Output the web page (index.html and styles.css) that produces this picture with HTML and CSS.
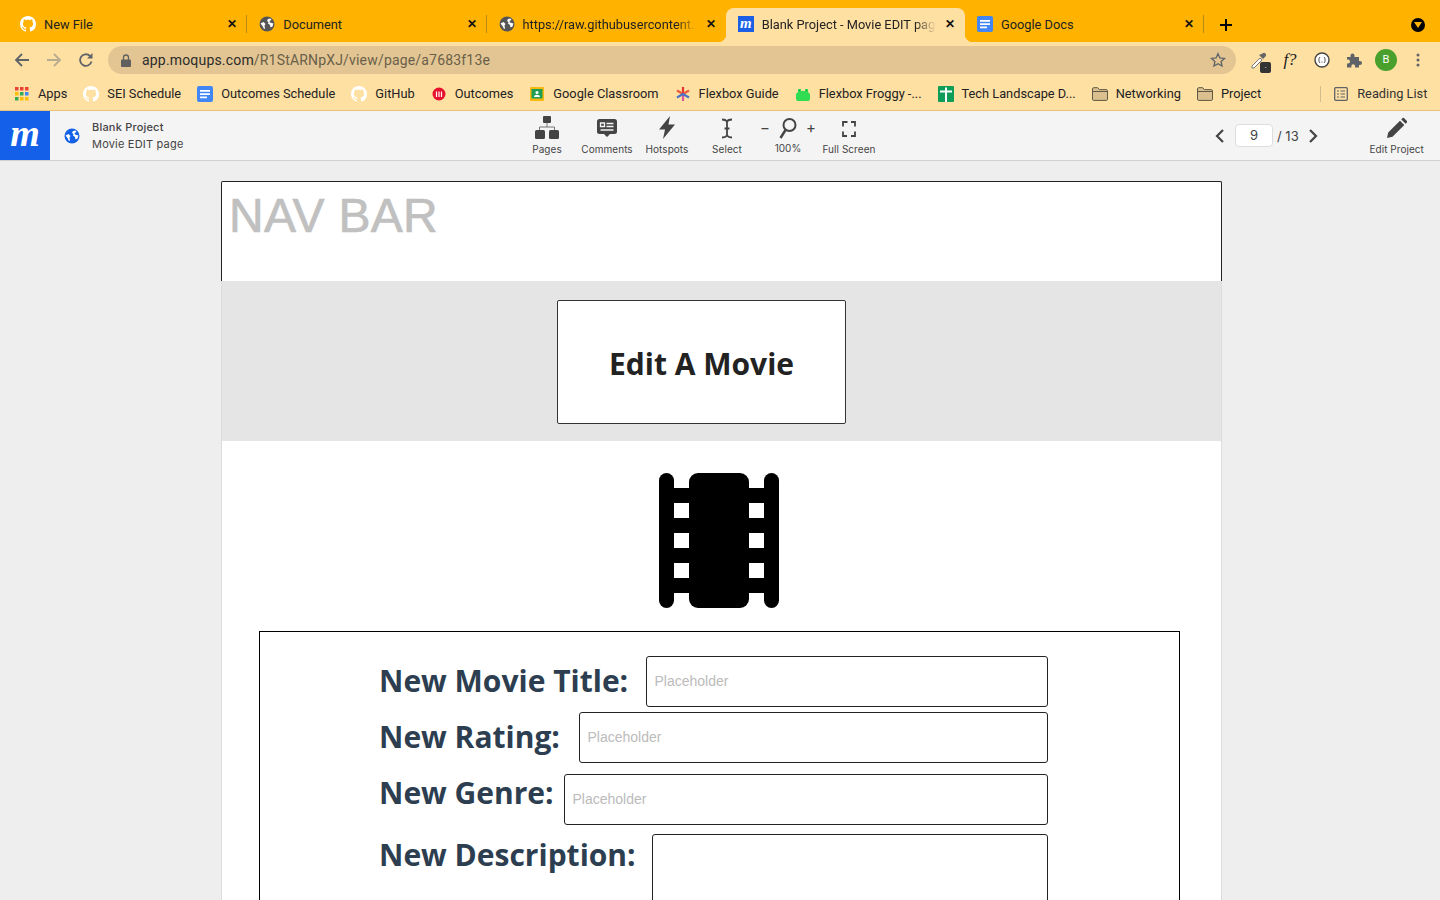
FILE: index.html
```html
<!DOCTYPE html>
<html lang="en">
<head>
<meta charset="UTF-8">
<meta name="viewport" content="width=device-width, initial-scale=1.0">
<title>Blank Project - Movie EDIT page</title>
<link rel="stylesheet" href="styles.css">
</head>
<body>
<svg class="defs" width="0" height="0">
  <symbol id="gh" viewBox="0 0 16 16"><path fill="#fff" d="M8 0C3.58 0 0 3.58 0 8c0 3.54 2.29 6.53 5.47 7.59.4.07.55-.17.55-.38 0-.19-.01-.82-.01-1.49-2.01.37-2.53-.49-2.69-.94-.09-.23-.48-.94-.82-1.13-.28-.15-.68-.52-.01-.53.63-.01 1.08.58 1.23.82.72 1.21 1.87.87 2.33.66.07-.52.28-.87.51-1.07-1.78-.2-3.64-.89-3.64-3.95 0-.87.31-1.59.82-2.15-.08-.2-.36-1.02.08-2.12 0 0 .67-.21 2.2.82.64-.18 1.32-.27 2-.27.68 0 1.36.09 2 .27 1.53-1.04 2.2-.82 2.2-.82.44 1.1.16 1.92.08 2.12.51.56.82 1.27.82 2.15 0 3.07-1.87 3.75-3.65 3.95.29.25.54.73.54 1.48 0 1.07-.01 1.93-.01 2.2 0 .21.15.46.55.38A8.013 8.013 0 0016 8c0-4.42-3.58-8-8-8z"/></symbol>
  <symbol id="globe" viewBox="0 0 16 16"><circle cx="8" cy="8" r="7.5" fill="currentColor"/><path fill="#fff" d="M1.500 7.500l3-1.500 2 2-1 1.500.5 3-1 .5-1.500-3zM9 3l2.500-.5 1 1.500-2 1 .5 1.500 3.500 1-1 3-2 1-.5-2.500-2-1.500.5-1.500-1.500-1z"/></symbol>
  <symbol id="doc" viewBox="0 0 16 16"><rect width="16" height="16" rx="2" fill="#4285f4"/><path fill="#fff" d="M3 4h10v1.700H3zM3 7.300h10V9H3zM3 10.600h7v1.700H3z"/></symbol>
  <symbol id="folder" viewBox="0 0 16 14"><path fill="#d9c08e" stroke="#5f5845" d="M.5 2c0-.8.5-1.300 1.200-1.300h4l1.600 1.900h7c.7 0 1.200.5 1.200 1.200v8.400c0 .7-.5 1.200-1.200 1.200H1.700c-.7 0-1.200-.5-1.200-1.200z"/><path stroke="#5f5845" d="M.5 4.500h15"/></symbol>
</svg>

<div class="tabstrip">
  <div class="tab">
    <svg class="fav"><use href="#gh"/></svg><span class="tab-title">New File</span><span class="tab-x">&#x2715;</span>
  </div>
  <div class="tab">
    <svg class="fav globe-dark"><use href="#globe"/></svg><span class="tab-title">Document</span><span class="tab-x">&#x2715;</span>
  </div>
  <div class="tab tab-nosep">
    <svg class="fav globe-dark"><use href="#globe"/></svg><span class="tab-title tab-fade">https://raw.githubusercontent.</span><span class="tab-x">&#x2715;</span>
  </div>
  <div class="tab tab-active">
    <span class="fav moq-fav">m</span><span class="tab-title tab-fade">Blank Project - Movie EDIT pag</span><span class="tab-x">&#x2715;</span>
  </div>
  <div class="tab">
    <svg class="fav"><use href="#doc"/></svg><span class="tab-title">Google Docs</span><span class="tab-x">&#x2715;</span>
  </div>
  <svg class="newtab" width="14" height="14" viewBox="0 0 14 14"><path d="M7 1v12M1 7h12" stroke="#000" stroke-width="2"/></svg>
  <span class="tab-menu"><svg width="8" height="6" viewBox="0 0 8 6"><path d="M0 0h8L4 6z" fill="#ffb300"/></svg></span>
</div>

<div class="toolbar">
  <svg class="nav-btn" viewBox="0 0 16 16"><path d="M15 8H2.500M8 2L2 8l6 6" fill="none" stroke="#5f6368" stroke-width="1.800"/></svg>
  <svg class="nav-btn" viewBox="0 0 16 16"><path d="M1 8h12.500M8 2l6 6-6 6" fill="none" stroke="#b8ab90" stroke-width="1.800"/></svg>
  <svg class="nav-btn" viewBox="0 0 16 16"><path d="M13.500 9.500A5.800 5.800 0 1 1 12 4" fill="none" stroke="#5f6368" stroke-width="1.800"/><path d="M14.500 1v5.500H9z" fill="#5f6368"/></svg>
  <div class="urlbar">
    <svg class="lock" width="10" height="13" viewBox="0 0 10 13"><path d="M2.500 6V3.500a2.500 2.500 0 0 1 5 0V6" fill="none" stroke="#5f5f5f" stroke-width="1.300"/><rect y="5.500" width="10" height="7.500" rx="1" fill="#5f5f5f"/></svg>
    <span class="url"><b>app.moqups.com</b>/R1StARNpXJ/view/page/a7683f13e</span>
    <svg class="star" width="16" height="16" viewBox="0 0 16 16"><path d="M8 1.700l1.900 4.200 4.600.5-3.400 3.100.9 4.500-4-2.300-4 2.300.9-4.500L1.500 6.400l4.600-.5z" fill="none" stroke="#5f6368" stroke-width="1.300"/></svg>
  </div>
  <div class="exts">
    <span class="ext ext-drop">
      <svg width="18" height="18" viewBox="0 0 18 18"><path d="M3 15l8-8 2 2-8 8H3z" fill="#fff" stroke="#777"/><path d="M10 4l4 4 2.500-2.500a1.800 1.800 0 0 0-3-3z" fill="#666"/></svg>
      <i class="ext-badge">.</i>
    </span>
    <span class="ext ext-f">f?</span>
    <span class="ext"><svg width="16" height="16" viewBox="0 0 16 16"><circle cx="8" cy="8" r="7" fill="#fff" stroke="#444" stroke-width="1.400"/><path d="M6 5C4.500 6 4.500 10 6 11M10 5c1.500 1 1.500 5 0 6" fill="none" stroke="#555"/><path d="M7.500 10h1" stroke="#555"/></svg></span>
    <span class="ext"><svg width="16" height="16" viewBox="0 0 16 16"><path fill="#5f6368" d="M1 5h3.500V3.500a2 2 0 0 1 4 0V5H13v4h1a2 2 0 0 1 0 4h-1v2.500H9V14a1.800 1.800 0 0 0-3.600 0v1.500H1v-4h1a2 2 0 0 0 0-4H1z"/></svg></span>
    <span class="ext"><span class="avatar">B</span></span>
    <span class="ext"><svg width="4" height="14" viewBox="0 0 4 14"><circle cx="2" cy="2" r="1.500" fill="#5f6368"/><circle cx="2" cy="7" r="1.500" fill="#5f6368"/><circle cx="2" cy="12" r="1.500" fill="#5f6368"/></svg></span>
  </div>
</div>

<div class="bookmarks">
  <div class="bm">
    <svg class="bm-ico" viewBox="0 0 16 16">
      <rect x="1" y="1" width="3.500" height="3.500" fill="#ea4335"/><rect x="6" y="1" width="3.500" height="3.500" fill="#ea4335"/><rect x="11" y="1" width="3.500" height="3.500" fill="#ea4335"/>
      <rect x="1" y="6" width="3.500" height="3.500" fill="#fbbc05"/><rect x="6" y="6" width="3.500" height="3.500" fill="#34a853"/><rect x="11" y="6" width="3.500" height="3.500" fill="#4285f4"/>
      <rect x="1" y="11" width="3.500" height="3.500" fill="#34a853"/><rect x="6" y="11" width="3.500" height="3.500" fill="#fbbc05"/><rect x="11" y="11" width="3.500" height="3.500" fill="#fbbc05"/>
    </svg>Apps
  </div>
  <div class="bm"><svg class="bm-ico"><use href="#gh"/></svg>SEI Schedule</div>
  <div class="bm"><svg class="bm-ico"><use href="#doc"/></svg>Outcomes Schedule</div>
  <div class="bm"><svg class="bm-ico"><use href="#gh"/></svg>GitHub</div>
  <div class="bm">
    <svg class="bm-ico" viewBox="0 0 16 16"><circle cx="8" cy="8" r="6.500" fill="#e8112d"/><path d="M5.500 11V5.500M8 11V5.500M10.500 11V5.500" stroke="#fff" stroke-width="1.200"/></svg>Outcomes
  </div>
  <div class="bm">
    <svg class="bm-ico" viewBox="0 0 16 16"><rect x="1" y="1" width="14" height="14" rx="1" fill="#f7b80f"/><rect x="2.500" y="3" width="11" height="9.500" fill="#1f9d55"/><circle cx="8" cy="6.500" r="1.500" fill="#fff"/><path d="M5 11c0-3 6-3 6 0z" fill="#fff"/></svg>Google Classroom
  </div>
  <div class="bm">
    <svg class="bm-ico" viewBox="0 0 16 16"><path d="M8 1v7" stroke="#e8352e" stroke-width="2.200"/><path d="M8 8v7" stroke="#d95a9a" stroke-width="2.200"/><path d="M2 4.500l6 3.500 6-3.500" fill="none" stroke="#ef5a3a" stroke-width="2.200"/><path d="M2 11.500L8 8l6 3.500" fill="none" stroke="#4a72c4" stroke-width="2.200"/></svg>Flexbox Guide
  </div>
  <div class="bm">
    <svg class="bm-ico" viewBox="0 0 16 16"><path fill="#2fdc52" d="M3 3h3v2h4V3h3v3l2 2v5l-1 2H2l-1-2V8l2-2z"/><path fill="#178a35" d="M4 4h1v1H4zM11 4h1v1h-1z"/></svg>Flexbox Froggy -...
  </div>
  <div class="bm">
    <svg class="bm-ico" viewBox="0 0 16 16"><rect width="16" height="16" rx="1" fill="#0f9d58"/><path d="M8 1.500V16M2 5.500h12" stroke="#fff" stroke-width="2"/></svg>Tech Landscape D...
  </div>
  <div class="bm"><svg class="bm-ico"><use href="#folder"/></svg>Networking</div>
  <div class="bm"><svg class="bm-ico"><use href="#folder"/></svg>Project</div>
  <div class="bm bm-reading">
    <svg class="bm-ico" viewBox="0 0 16 16"><rect x="1.700" y="1.700" width="12.600" height="12.600" rx="1" fill="none" stroke="#5f6368" stroke-width="1.300"/><path d="M4 5h2M4 8h2M4 11h2M7.500 5h4.500M7.500 8h4.500M7.500 11h4.500" stroke="#5f6368" stroke-width="1.200"/></svg>Reading List
  </div>
</div>

<div class="mq-bar">
  <div class="mq-logo">m</div>
  <div class="mq-project">
    <svg class="mq-globe" width="16" height="16"><use href="#globe"/></svg>
    <div class="mq-names">
      <div>Blank Project</div>
      <div>Movie EDIT page</div>
    </div>
  </div>
  <div class="mq-tools">
    <div class="tool">
      <svg width="24" height="24" viewBox="0 0 24 24"><rect x="8" y="0" width="8" height="7" rx="1" fill="#444"/><path d="M12 7v4M4.500 14v-3h15v3" fill="none" stroke="#777"/><rect x="0" y="14" width="10" height="9" rx="1.500" fill="#444"/><rect x="14" y="14" width="10" height="9" rx="1.500" fill="#444"/></svg>
      <span>Pages</span>
    </div>
    <div class="tool">
      <svg width="20" height="24" viewBox="0 0 20 24"><path fill="#444" d="M2.500 3h15A2.500 2.500 0 0 1 20 5.500v10a2.500 2.500 0 0 1-2.500 2.500H13l-3 3-3-3H2.500A2.500 2.500 0 0 1 0 15.500v-10A2.500 2.500 0 0 1 2.500 3z"/><path d="M3.500 7h4v3.500h-4zM9.500 7.500h7M9.500 10.500h7M3.500 14h13" stroke="#f4f4f4" stroke-width="1.300" fill="none"/></svg>
      <span>Comments</span>
    </div>
    <div class="tool">
      <svg width="16" height="24" viewBox="0 0 16 24"><path fill="#444" d="M11 0L0 13.500h6L4 23l12-14.500H9.500z"/></svg>
      <span>Hotspots</span>
    </div>
    <div class="tool">
      <svg width="12" height="24" viewBox="0 0 12 24"><path d="M1 3.500c3 0 4 .5 5 2 1-1.500 2-2 5-2M1 21.500c3 0 4-.5 5-2 1 1.500 2 2 5 2M6 5v15M3.500 12.500h5" fill="none" stroke="#444" stroke-width="1.800"/></svg>
      <span>Select</span>
    </div>
    <div class="tool tool-zoom">
      <div class="zoom-row">
        <i>&minus;</i>
        <svg width="18" height="24" viewBox="0 0 18 24"><circle cx="10.500" cy="9" r="6" fill="none" stroke="#444" stroke-width="2"/><path d="M6.500 14L1.500 22" stroke="#444" stroke-width="2.400"/></svg>
        <i>+</i>
      </div>
      <span>100%</span>
    </div>
    <div class="tool tool-full">
      <svg width="14" height="24" viewBox="0 0 14 24"><path d="M1 10.500V6h4.500M9 6h4v4.500M1 15.500V20h4M9 20h4v-4.500" fill="none" stroke="#444" stroke-width="1.800"/></svg>
      <span>Full Screen</span>
    </div>
  </div>
  <div class="mq-right">
    <svg class="pager-arrow" width="10" height="14" viewBox="0 0 10 14"><path d="M8 1L2 7l6 6" fill="none" stroke="#444" stroke-width="2.200"/></svg>
    <span class="pager-num">9</span>
    <span class="pager-total">/ 13</span>
    <svg class="pager-arrow" width="10" height="14" viewBox="0 0 10 14"><path d="M2 1l6 6-6 6" fill="none" stroke="#444" stroke-width="2.200"/></svg>
    <div class="tool tool-edit">
      <svg width="20" height="24" viewBox="0 0 20 24"><path fill="#444" d="M0 22l1.200-5.500L13 4.700l4.300 4.300L5.500 20.800zM14.300 3.400l1.300-1.300a1 1 0 0 1 1.400 0l2.900 2.900a1 1 0 0 1 0 1.400L18.600 7.700z"/></svg>
      <span>Edit Project</span>
    </div>
  </div>
</div>

<div class="canvas">
  <div class="page">
    <div class="navbox">NAV BAR</div>
    <div class="band">
      <div class="band-box"><h1>Edit A Movie</h1></div>
    </div>
    <svg class="film" width="120" height="135" viewBox="0 0 120 135">
      <rect x="0" width="15" height="135" rx="7.500"/>
      <rect x="105" width="15" height="135" rx="7.500"/>
      <rect x="30" width="60" height="135" rx="9"/>
      <path d="M0 15h120v15H0zM0 45h120v15H0zM0 75h120v15H0zM0 105h120v15H0z"/>
    </svg>
    <div class="form-box">
      <div class="row row-title">
        <label>New Movie Title:</label>
        <input class="field" placeholder="Placeholder">
      </div>
      <div class="row row-rating">
        <label>New Rating:</label>
        <input class="field" placeholder="Placeholder">
      </div>
      <div class="row row-genre">
        <label>New Genre:</label>
        <input class="field" placeholder="Placeholder">
      </div>
      <div class="row row-desc">
        <label>New Description:</label>
        <textarea class="field field-area"></textarea>
      </div>
    </div>
  </div>
</div>
</body>
</html>
```

FILE: styles.css
```css
* {
  box-sizing: border-box;
}

html, body {
  margin: 0;
  height: 900px;
  overflow: hidden;
}

body {
  font-family: Roboto, "Liberation Sans", sans-serif;
  background: #eee;
}

.defs {
  display: block;
  height: 0;
}

/* browser chrome */
.tabstrip {
  display: flex;
  align-items: flex-end;
  height: 42px;
  padding-left: 8px;
  background: #ffb300;
}

.tab {
  display: flex;
  align-items: center;
  width: 239.250px;
  height: 34px;
  padding: 0 8px 2px 12px;
  font-size: 12.800px;
  color: #222;
  position: relative;
}

/* separator between idle tabs */
.tab::after {
  content: "";
  position: absolute;
  right: 0;
  top: 7px;
  height: 18px;
  width: 1px;
  background: #b98a16;
}

.tab-nosep::after {
  display: none;
}

.tab-active {
  background: #ffe0a3;
  border-radius: 8px 8px 0 0;
}

/* the flared bottom corners of the open tab */
.tab-active::before,
.tab-active::after {
  content: "";
  position: absolute;
  top: auto;
  bottom: 0;
  width: 8px;
  height: 8px;
  background: radial-gradient(circle at 0 0, transparent 8px, #ffe0a3 8.5px);
}

.tab-active::before {
  left: -8px;
}

.tab-active::after {
  right: -8px;
  background: radial-gradient(circle at 100% 0, transparent 8px, #ffe0a3 8.5px);
}

.fav {
  flex: none;
  width: 16px;
  height: 16px;
  margin-right: 8px;
}

.globe-dark {
  color: #555;
}

.moq-fav {
  background: #1a5fe6;
  color: #fff;
  font: italic bold 15px/15px "Liberation Serif", serif;
  text-align: center;
}

.tab-title {
  flex: 1;
  overflow: hidden;
  white-space: nowrap;
}

.tab-fade {
  -webkit-mask-image: linear-gradient(to right, #000 88%, transparent);
  mask-image: linear-gradient(to right, #000 88%, transparent);
}

.tab-x {
  flex: none;
  width: 12px;
  margin-left: 8px;
  margin-right: 1px;
  font-size: 12px;
  font-weight: 700;
  color: #111;
  text-align: center;
}

.newtab {
  margin: 0 0 10px 15px;
}

.tab-menu {
  display: flex;
  align-items: center;
  justify-content: center;
  width: 14px;
  height: 14px;
  margin: 0 0 10px 178px;
  border-radius: 50%;
  background: #000;
}

.toolbar {
  display: flex;
  align-items: center;
  height: 36px;
  padding-left: 14px;
  background: #ffe0a3;
}

.nav-btn {
  flex: none;
  width: 16px;
  height: 16px;
  margin-right: 16px;
}

.urlbar {
  display: flex;
  align-items: center;
  flex: none;
  width: 1128px;
  height: 28px;
  margin-left: -2px;
  padding: 0 10px 0 13px;
  border-radius: 14px;
  background: #e2c592;
}

.lock {
  flex: none;
}

.url {
  flex: 1;
  margin-left: 11px;
  font-size: 14px;
  letter-spacing: .18px;
  color: #6a5f4a;
}

.url b {
  font-weight: 400;
  color: #2c2c2c;
}

.exts {
  display: flex;
  margin-left: 6px;
}

.ext {
  display: flex;
  align-items: center;
  justify-content: center;
  width: 32px;
  height: 24px;
  position: relative;
}

.ext-badge {
  position: absolute;
  right: 3px;
  bottom: -1px;
  width: 11px;
  height: 11px;
  background: #333;
  border-radius: 2px;
  color: #fff;
  font: 8px/8px "Liberation Sans", sans-serif;
  text-align: center;
}

.ext-f {
  font: italic 17px "Liberation Serif", serif;
  color: #222;
}

.avatar {
  width: 22px;
  height: 22px;
  border-radius: 50%;
  background: #4aa02c;
  color: #fff;
  font-size: 11px;
  line-height: 22px;
  text-align: center;
}

.bookmarks {
  display: flex;
  align-items: center;
  height: 33px;
  padding: 0 0 1px 14px;
  background: #ffe0a3;
  font-size: 12.800px;
  color: #222;
  border-bottom: 1px solid #e7c27c;
}

.bm {
  display: flex;
  align-items: center;
  margin-right: 16px;
  white-space: nowrap;
}

.bm-ico {
  flex: none;
  width: 16px;
  height: 16px;
  margin-right: 8px;
}

.bm-reading {
  margin-left: 43px;
  margin-right: 0;
  padding-left: 12px;
  border-left: 1px solid #d4bc8c;
  color: #333;
}

/* moqups viewer bar */
.mq-bar {
  display: flex;
  height: 50px;
  background: #f4f4f4;
  border-bottom: 1px solid #d0d0d0;
  font-family: Inter, "Liberation Sans", sans-serif;
  color: #444;
}

.mq-logo {
  flex: none;
  width: 50px;
  background: #1460e8;
  color: #fff;
  font: italic bold 38px/44px "Liberation Serif", serif;
  text-align: center;
}

.mq-project {
  display: flex;
  align-items: center;
  flex: none;
  width: 467px;
  padding-left: 14px;
}

.mq-globe {
  color: #1460e8;
  margin-right: 12px;
}

.mq-names {
  font-size: 11px;
  line-height: 17px;
  letter-spacing: .2px;
}

.mq-names div:first-child {
  font-weight: 500;
}

.mq-tools {
  display: flex;
}

.tool {
  display: flex;
  flex-direction: column;
  align-items: center;
  width: 60px;
  padding-top: 5px;
  font-size: 10px;
  line-height: 12px;
  letter-spacing: .05px;
  white-space: nowrap;
}

.tool svg {
  display: block;
  margin-bottom: 3px;
}

.tool-zoom {
  width: 62px;
}

.zoom-row {
  display: flex;
  align-items: center;
  gap: 9px;
  height: 24px;
  margin-bottom: 2px;
}

.zoom-row i {
  font-style: normal;
  font-size: 15px;
}

.zoom-row svg {
  margin-bottom: 0;
}

.tool-full {
  width: 62px;
  margin-left: -1px;
}

.mq-right {
  display: flex;
  align-items: center;
  margin-left: 335px;
}

.pager-num {
  width: 38px;
  height: 23px;
  margin: 0 4px 0 10px;
  background: #fff;
  border: 1px solid #ddd;
  border-radius: 4px;
  font-size: 13px;
  line-height: 21px;
  text-align: center;
}

.pager-total {
  font-size: 13px;
  margin-right: 9px;
}

.tool-edit {
  align-self: flex-start;
  width: 60px;
  margin-left: 49px;
}

/* mockup page */
.canvas {
  padding: 20px 0 0 221px;
}

.page {
  width: 1001px;
  height: 800px;
  background: #fff;
  border-left: 1px solid #ddd;
  border-right: 1px solid #ddd;
}

.navbox {
  height: 100px;
  margin: 0 0 0 -1px;
  width: 1001px;
  padding: 6px 0 0 7px;
  background: #fff;
  border: 1px solid #222;
  border-bottom: 0;
  border-radius: 2px 2px 0 0;
  font: 48px/56px "Liberation Sans", sans-serif;
  letter-spacing: .25px;
  color: #c0c0c0;
  -webkit-text-stroke: .7px #c0c0c0;
}

.band {
  height: 160px;
  padding: 19px 0 0 335px;
  background: #e5e5e5;
}

.band-box {
  display: flex;
  align-items: center;
  justify-content: center;
  width: 289px;
  height: 124px;
  background: #fff;
  border: 1px solid #333;
  border-radius: 2px;
}

.band-box h1 {
  margin: 4px 0 0;
  font: 700 30px/40px "Open Sans", sans-serif;
  color: #222;
}

.film {
  display: block;
  margin: 32px 0 23px 437px;
}

.form-box {
  width: 921px;
  height: 400px;
  margin-left: 37px;
  padding: 24px 131px 0 119px;
  border: 1px solid #000;
}

.row {
  display: flex;
  justify-content: space-between;
  margin-bottom: 5px;
}

.row label {
  font: 700 30px/50px "Open Sans", sans-serif;
  color: #2c3e50;
}

.field {
  display: block;
  height: 51px;
  padding: 0 7.500px 2px;
  background: #fff;
  border: 1px solid #222;
  border-radius: 3px;
  font: 14px "Liberation Sans", sans-serif;
}

.field::placeholder {
  color: #bbb;
  opacity: 1;
}

.row-title .field {
  width: 402px;
}

.row-rating .field {
  width: 469px;
}

.row-genre .field {
  width: 484px;
  margin-top: 6px;
}

.row-desc .field {
  width: 396px;
  margin-top: 4px;
}

.field-area {
  height: 120px;
  resize: none;
}
```
